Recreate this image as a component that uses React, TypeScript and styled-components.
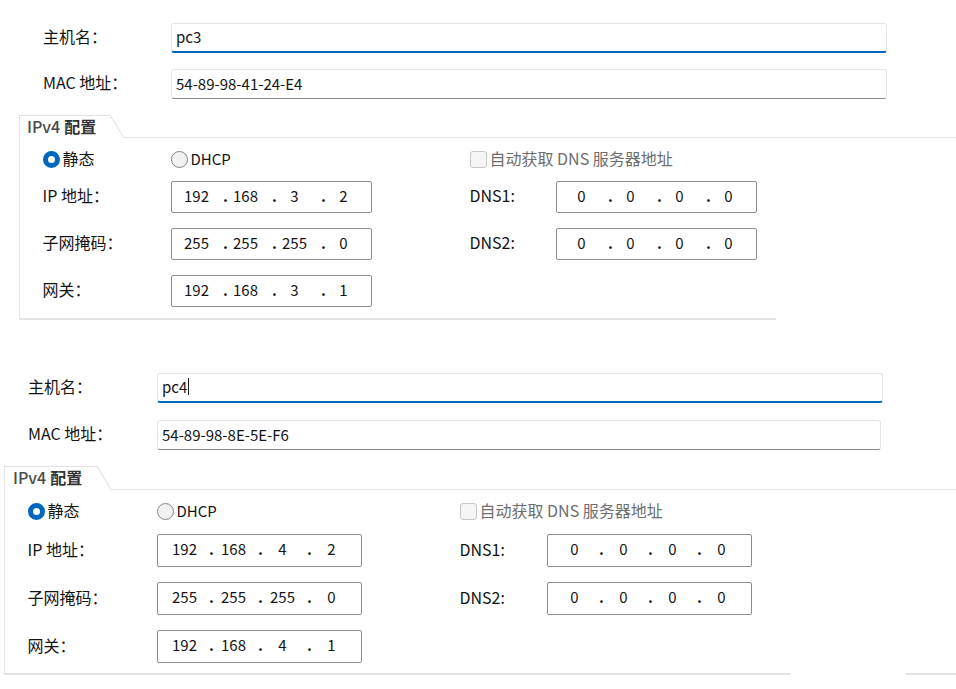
import React from "react";
import styled, { createGlobalStyle } from "styled-components";

const Global = createGlobalStyle`
  html, body { margin: 0; padding: 0; background: #ffffff; }
  body {
    font-family: "Noto Sans CJK SC", "Liberation Sans", sans-serif;
    color: #161616;
    line-height: 1.2;
  }
`;

type Metrics = {
  padTop: number;
  labelX: number;
  labelW: number;
  hostW: number;
  macW: number;
  inputH: number;
  inputGap: number;
  groupX: number;
  groupGap: number;
  tabW: number;
  tabH: number;
  tabPadL: number;
  bodyPadT: number;
  radioGap: number;
  boxW: number;
  boxH: number;
  rowGap: number;
  col2: number;
  dnsLabelW: number;
  bodyPadB: number;
  ruleEnd: number;
  ruleResume?: number;
  segPad: number;
  dotPad: number;
};

const Section = styled.section<{ $m: Metrics }>`
  padding-top: ${(p) => p.$m.padTop}px;
`;

const Fields = styled.div<{ $m: Metrics }>`
  display: flex;
  flex-direction: column;
  gap: ${(p) => p.$m.inputGap}px;
  padding-left: ${(p) => p.$m.labelX}px;
`;

const FieldRow = styled.div`
  display: flex;
  align-items: center;
`;

const Label = styled.div<{ $w?: number }>`
  width: ${(p) => (p.$w ? `${p.$w}px` : "auto")};
  flex: none;
  font-size: 16px;
  color: #141414;
  white-space: nowrap;
  padding-bottom: 2px;
`;

const TextBox = styled.div<{ $w: number; $h: number; $focus?: boolean }>`
  box-sizing: border-box;
  width: ${(p) => p.$w}px;
  height: ${(p) => p.$h}px;
  display: flex;
  align-items: center;
  padding: ${(p) => (p.$focus ? "0 4px 2px" : "0 4px 1px")};
  border: 1px solid #e6e6e6;
  border-bottom: ${(p) => (p.$focus ? "2px solid #0067c0" : "1px solid #8a8a8a")};
  border-radius: 3px;
  background: #ffffff;
  color: #141414;
  font-size: 15px;
`;

const Caret = styled.span`
  display: inline-block;
  width: 1px;
  height: 17px;
  background: #1a1a1a;
  margin-left: 1px;
`;

const Group = styled.div<{ $m: Metrics }>`
  margin-top: ${(p) => p.$m.groupGap}px;
  padding-left: ${(p) => p.$m.groupX}px;
`;

const TabHeader = styled.div<{ $m: Metrics }>`
  display: flex;
  height: ${(p) => p.$m.tabH}px;
`;

const Tab = styled.div<{ $m: Metrics }>`
  box-sizing: border-box;
  width: ${(p) => p.$m.tabW}px;
  border-top: 1.5px solid #e2e2e2;
  border-left: 1.5px solid #e2e2e2;
  padding-left: ${(p) => p.$m.tabPadL}px;
  padding-bottom: 1px;
  display: flex;
  align-items: center;
  gap: 4px;
  font-size: 16px;
  color: #3a3a3a;
  white-space: nowrap;
`;

const TabLatin = styled.span`
  font-weight: 500;
  color: #4a4a4a;
`;

const TabCjk = styled.span`
  font-weight: 700;
  color: #333333;
`;

const TabSlant = styled.div`
  width: 14px;
  flex: none;
  background: linear-gradient(
    to top right,
    transparent calc(50% - 1px),
    #e2e2e2 50%,
    transparent calc(50% + 1px)
  );
`;

const TabRule = styled.div`
  flex: 1;
  border-bottom: 1.5px solid #e4e4e4;
`;

const Body = styled.div<{ $m: Metrics }>`
  border-left: 1.5px solid #e2e2e2;
  padding: ${(p) => p.$m.bodyPadT}px 0 ${(p) => p.$m.bodyPadB}px
    ${(p) => p.$m.labelX - p.$m.groupX - 1.5}px;
  background-image: linear-gradient(#e4e4e4, #e4e4e4)
      ${(p) =>
        p.$m.ruleResume ? `, linear-gradient(#e4e4e4, #e4e4e4)` : ""};
  background-repeat: no-repeat;
  background-size: ${(p) => p.$m.ruleEnd - p.$m.groupX}px 2px
      ${(p) => (p.$m.ruleResume ? `, ${956 - p.$m.ruleResume}px 2px` : "")};
  background-position: left bottom
      ${(p) =>
        p.$m.ruleResume ? `, ${p.$m.ruleResume - p.$m.groupX}px bottom` : ""};
`;

const Grid = styled.div<{ $m: Metrics }>`
  display: grid;
  grid-template-columns: ${(p) =>
    `${p.$m.labelW}px ${p.$m.col2}px ${p.$m.dnsLabelW}px ${p.$m.boxW}px`};
  grid-auto-rows: ${(p) => p.$m.boxH}px;
  row-gap: ${(p) => p.$m.rowGap}px;
  align-items: center;
`;

const RadioRow = styled.div<{ $m: Metrics }>`
  display: grid;
  grid-template-columns: ${(p) =>
    `${p.$m.labelW}px ${p.$m.col2}px auto`};
  height: 18px;
  align-items: center;
  margin-bottom: ${(p) => p.$m.radioGap}px;
`;

const Choice = styled.div`
  display: flex;
  align-items: center;
  gap: 3px;
  white-space: nowrap;
`;

const RadioDot = styled.span<{ $on?: boolean }>`
  box-sizing: border-box;
  width: 17px;
  height: 17px;
  border-radius: 50%;
  flex: none;
  background: ${(p) => (p.$on ? "#ffffff" : "#f2f2f2")};
  border: ${(p) => (p.$on ? "5.5px solid #0067c0" : "1px solid #858585")};
`;

const CheckBox = styled.span`
  box-sizing: border-box;
  width: 17px;
  height: 17px;
  flex: none;
  border-radius: 3px;
  border: 1px solid #c6c6c6;
  background: #f5f5f5;
`;

const ChoiceText = styled.span<{ $muted?: boolean; $latin?: boolean }>`
  font-size: ${(p) => (p.$latin ? "15px" : "16px")};
  color: ${(p) => (p.$muted ? "#6e6e6e" : "#141414")};
  padding-bottom: 2px;
`;

const IpBox = styled.div<{ $m: Metrics }>`
  box-sizing: border-box;
  height: ${(p) => p.$m.boxH}px;
  width: ${(p) => p.$m.boxW}px;
  border: 1px solid #8e8e8e;
  border-radius: 2px;
  display: flex;
  align-items: center;
  padding-left: ${(p) => p.$m.segPad}px;
  padding-bottom: 3px;
  font-size: 15px;
  color: #141414;
`;

const Seg = styled.span`
  width: 30px;
  text-align: center;
  flex: none;
`;

const Dot = styled.span<{ $m: Metrics }>`
  width: 19px;
  flex: none;
  box-sizing: border-box;
  padding-left: ${(p) => p.$m.dotPad}px;
  font-weight: 700;
`;

const m1: Metrics = {
  padTop: 23,
  labelX: 43,
  labelW: 128,
  hostW: 716,
  macW: 716,
  inputH: 30,
  inputGap: 16,
  groupX: 19,
  groupGap: 16,
  tabW: 91,
  tabH: 23,
  tabPadL: 7,
  bodyPadT: 11,
  radioGap: 14,
  boxW: 201,
  boxH: 32,
  rowGap: 15,
  col2: 299,
  dnsLabelW: 86,
  bodyPadB: 13,
  ruleEnd: 775,
  segPad: 10,
  dotPad: 11.5,
};

const m2: Metrics = {
  padTop: 53,
  labelX: 28,
  labelW: 129,
  hostW: 726,
  macW: 724,
  inputH: 30,
  inputGap: 17,
  groupX: 4,
  groupGap: 16,
  tabW: 93,
  tabH: 24,
  tabPadL: 8,
  bodyPadT: 11,
  radioGap: 15,
  boxW: 205,
  boxH: 33,
  rowGap: 15,
  col2: 303,
  dnsLabelW: 87,
  bodyPadB: 12,
  ruleEnd: 789,
  ruleResume: 905,
  segPad: 12,
  dotPad: 9.5,
};

type Data = {
  host: string;
  mac: string;
  ip: string[];
  mask: string[];
  gw: string[];
  caret?: boolean;
  m: Metrics;
};

const data: Data[] = [
  {
    host: "pc3",
    mac: "54-89-98-41-24-E4",
    ip: ["192", "168", "3", "2"],
    mask: ["255", "255", "255", "0"],
    gw: ["192", "168", "3", "1"],
    m: m1,
  },
  {
    host: "pc4",
    mac: "54-89-98-8E-5E-F6",
    ip: ["192", "168", "4", "2"],
    mask: ["255", "255", "255", "0"],
    gw: ["192", "168", "4", "1"],
    caret: true,
    m: m2,
  },
];

const zero = ["0", "0", "0", "0"];

function Ip({ parts, m }: { parts: string[]; m: Metrics }) {
  return (
    <IpBox $m={m}>
      {parts.map((p, i) => (
        <React.Fragment key={i}>
          <Seg>{p}</Seg>
          {i < 3 && <Dot $m={m}>.</Dot>}
        </React.Fragment>
      ))}
    </IpBox>
  );
}

function Panel({ d }: { d: Data }) {
  const m = d.m;
  return (
    <Section $m={m}>
      <Fields $m={m}>
        <FieldRow>
          <Label $w={m.labelW}>主机名：</Label>
          <TextBox $w={m.hostW} $h={m.inputH} $focus>
            {d.host}
            {d.caret && <Caret />}
          </TextBox>
        </FieldRow>
        <FieldRow>
          <Label $w={m.labelW}>MAC 地址：</Label>
          <TextBox $w={m.macW} $h={m.inputH}>
            {d.mac}
          </TextBox>
        </FieldRow>
      </Fields>
      <Group $m={m}>
        <TabHeader $m={m}>
          <Tab $m={m}>
            <TabLatin>IPv4</TabLatin>
            <TabCjk>配置</TabCjk>
          </Tab>
          <TabSlant />
          <TabRule />
        </TabHeader>
        <Body $m={m}>
          <RadioRow $m={m}>
            <Choice>
              <RadioDot $on />
              <ChoiceText>静态</ChoiceText>
            </Choice>
            <Choice>
              <RadioDot />
              <ChoiceText $latin>DHCP</ChoiceText>
            </Choice>
            <Choice>
              <CheckBox />
              <ChoiceText $muted>自动获取 DNS 服务器地址</ChoiceText>
            </Choice>
          </RadioRow>
          <Grid $m={m}>
            <Label>IP 地址：</Label>
            <Ip parts={d.ip} m={m} />
            <Label>DNS1:</Label>
            <Ip parts={zero} m={m} />
            <Label>子网掩码：</Label>
            <Ip parts={d.mask} m={m} />
            <Label>DNS2:</Label>
            <Ip parts={zero} m={m} />
            <Label>网关：</Label>
            <Ip parts={d.gw} m={m} />
          </Grid>
        </Body>
      </Group>
    </Section>
  );
}

export default function App() {
  return (
    <>
      <Global />
      {data.map((d) => (
        <Panel key={d.host} d={d} />
      ))}
    </>
  );
}
